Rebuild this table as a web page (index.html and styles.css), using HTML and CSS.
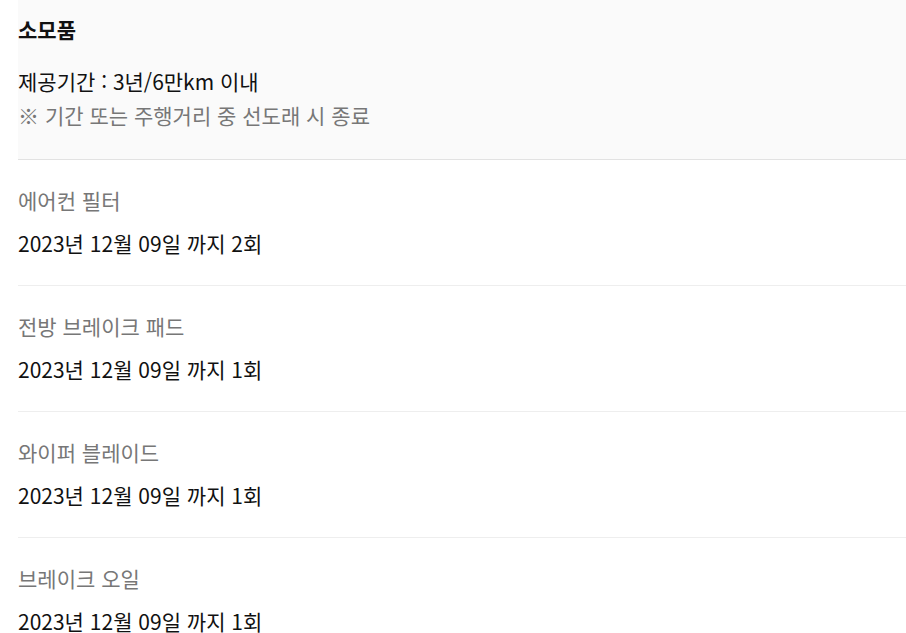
FILE: index.html
```html
<!DOCTYPE html>
<html lang="ko">
<head>
<meta charset="utf-8">
<link rel="stylesheet" href="styles.css">
</head>
<body>
<div class="page">
  <section class="summary">
    <h2 class="title">소모품</h2>
    <p class="period">제공기간 : 3년/6만km 이내</p>
    <p class="note">※ 기간 또는 주행거리 중 선도래 시 종료</p>
  </section>
  <ul class="list">
    <li class="item">
      <div class="name">에어컨 필터</div>
      <div class="due">2023년 12월 09일 까지 2회</div>
    </li>
    <li class="item">
      <div class="name">전방 브레이크 패드</div>
      <div class="due">2023년 12월 09일 까지 1회</div>
    </li>
    <li class="item">
      <div class="name">와이퍼 블레이드</div>
      <div class="due">2023년 12월 09일 까지 1회</div>
    </li>
    <li class="item">
      <div class="name">브레이크 오일</div>
      <div class="due">2023년 12월 09일 까지 1회</div>
    </li>
  </ul>
</div>
</body>
</html>
```

FILE: styles.css
```css
html, body {
  margin: 0;
  padding: 0;
  background: #fff;
}
body {
  font-family: "Noto Sans CJK KR", "Noto Sans", sans-serif;
  font-size: 21px;
  color: #111;
}
.page {
  padding-left: 18px;
}
.summary {
  background: #fafafa;
  border-bottom: 1px solid #e2e2e2;
  padding: 16px 0 31px;
}
.title {
  margin: 0;
  font-size: 21px;
  font-weight: 700;
  line-height: 26px;
}
.period {
  margin: 26px 0 0;
  line-height: 26px;
}
.note {
  margin: 8px 0 0;
  line-height: 26px;
  color: #777;
}
.list {
  list-style: none;
  margin: 0;
  padding: 0;
}
.item {
  padding: 27px 0 29px;
  border-bottom: 1px solid #eee;
  display: flex;
  flex-direction: column;
  gap: 17px;
}
.name {
  line-height: 26px;
  color: #777;
}
.due {
  line-height: 26px;
}
```
